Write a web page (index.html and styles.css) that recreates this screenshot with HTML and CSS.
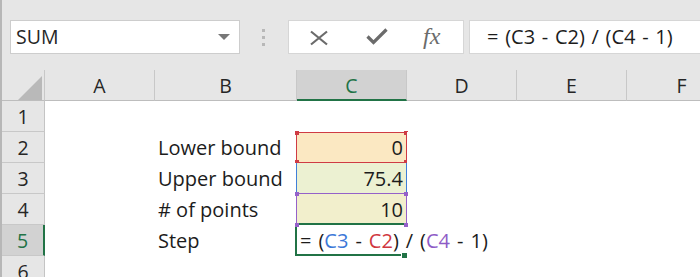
FILE: index.html
```html
<!DOCTYPE html>
<html>
<head>
<meta charset="utf-8">
<link rel="stylesheet" href="styles.css">
</head>
<body>
<div class="app">
  <div class="fbar">
    <div class="namebox">
      <span class="nb-text">SUM</span>
      <svg class="nb-arrow" width="12" height="6" viewBox="0 0 12 6"><polygon points="0,0 12,0 6,6" fill="#777"/></svg>
    </div>
    <div class="grip">
      <svg width="4" height="18" viewBox="0 0 4 18"><rect x="0" y="0" width="3" height="3" fill="#b8b8b8"/><rect x="0" y="7" width="3" height="3" fill="#b8b8b8"/><rect x="0" y="14" width="3" height="3" fill="#b8b8b8"/></svg>
    </div>
    <div class="fbtns">
      <svg class="ic-x" width="20" height="16" viewBox="0 0 20 16"><path d="M2 1.5 L18 14.5 M18 1.5 L2 14.5" stroke="#6b6b6b" stroke-width="2.2" fill="none"/></svg>
      <svg class="ic-check" width="22" height="17" viewBox="0 0 22 17"><path d="M1.5 8.5 L7.5 14.5 L20.5 1.5" stroke="#6b6b6b" stroke-width="3.2" fill="none" stroke-linejoin="miter"/></svg>
      <span class="ic-fx">fx</span>
    </div>
    <div class="finput">= (C3 - C2) / (C4 - 1)</div>
  </div>
  <div class="sheet">
    <div class="ch corner"><svg width="24" height="24" viewBox="0 0 24 24"><polygon points="24,0 24,24 0,24" fill="#b9b9b9"/></svg></div>
    <div class="ch">A</div>
    <div class="ch">B</div>
    <div class="ch sel">C</div>
    <div class="ch">D</div>
    <div class="ch">E</div>
    <div class="ch">F</div>

    <div class="rh">1</div>
    <div class="c"></div><div class="c"></div><div class="c"></div><div class="c"></div><div class="c"></div><div class="c"></div>

    <div class="rh">2</div>
    <div class="c"></div>
    <div class="c lbl">Lower bound</div>
    <div class="c num c2">0<span class="ref ref-red"><i class="sq tl"></i><i class="sq tr"></i><i class="sq bl"></i><i class="sq br"></i></span></div>
    <div class="c"></div><div class="c"></div><div class="c"></div>

    <div class="rh">3</div>
    <div class="c"></div>
    <div class="c lbl">Upper bound</div>
    <div class="c num c3">75.4<span class="ref ref-blue"></span></div>
    <div class="c"></div><div class="c"></div><div class="c"></div>

    <div class="rh">4</div>
    <div class="c"></div>
    <div class="c lbl"># of points</div>
    <div class="c num c4">10<span class="ref ref-purple"><i class="sq tl"></i><i class="sq tr"></i><i class="sq bl"></i><i class="sq br"></i></span></div>
    <div class="c"></div><div class="c"></div><div class="c"></div>

    <div class="rh sel">5</div>
    <div class="c"></div>
    <div class="c lbl">Step</div>
    <div class="c active"><span class="edit">= (<span class="t-blue">C3</span> - <span class="t-red">C2</span>) / (<span class="t-purple">C4</span> - 1)</span><span class="act-box"></span><span class="handle"></span></div>
    <div class="c"></div><div class="c"></div><div class="c"></div>

    <div class="rh">6</div>
    <div class="c"></div><div class="c"></div><div class="c"></div><div class="c"></div><div class="c"></div><div class="c"></div>
  </div>
</div>
</body>
</html>
```

FILE: styles.css
```css
html, body {
  margin: 0;
  padding: 0;
  background: #ffffff;
  overflow: hidden;
}
.app {
  width: 698px;
  height: 277px;
  border-left: 2px solid #b7b7b7;
  background: #e6e6e6;
  font-family: "Open Sans", "Noto Sans", sans-serif;
  font-size: 20px;
  color: #1c1c1c;
  overflow: hidden;
  position: relative;
}
.fbar {
  display: flex;
  align-items: stretch;
  height: 34px;
  padding-top: 20px;
  padding-left: 8px;
  margin-bottom: 16px;
  border-top: 1px solid #f3f3f3;
  margin-top: -1px;
}
.namebox {
  box-sizing: border-box;
  width: 230px;
  background: #fff;
  border: 1px solid #cdcdcd;
  display: flex;
  align-items: center;
  justify-content: space-between;
  padding: 0 9px 0 5px;
}
.nb-text {
  font-size: 19.5px;
  color: #262626;
  line-height: 1;
  margin-top: -1px;
}
.grip {
  width: 48px;
  display: flex;
  align-items: center;
  justify-content: center;
  padding-top: 2px;
}
.fbtns {
  box-sizing: border-box;
  width: 176px;
  background: #fff;
  border: 1px solid #d6d6d6;
  display: flex;
  align-items: center;
  position: relative;
}
.ic-x { margin-left: 20px; margin-top: 1px; }
.ic-check { margin-left: 37px; margin-top: -2px; }
.ic-fx {
  margin-left: 35px;
  font-family: "Liberation Serif", serif;
  font-style: italic;
  font-size: 24px;
  color: #6b6b6b;
  line-height: 1;
  margin-top: -3px;
}
.finput {
  box-sizing: border-box;
  flex: 1;
  margin-left: 5px;
  background: #fff;
  border: 1px solid #d6d6d6;
  border-right: none;
  padding-left: 17px;
  line-height: 31px;
  white-space: nowrap;
  color: #1c1c1c;
  word-spacing: 1.5px;
}
.sheet {
  display: grid;
  grid-template-columns: 43px 110px 142px 110px 110px 110px 110px;
  grid-template-rows: 31px repeat(6, 31px);
}
.ch {
  box-sizing: border-box;
  border-right: 1px solid #c8c8c8;
  border-bottom: 1px solid #bdbdbd;
  text-align: center;
  line-height: 30px;
  padding-top: 1px;
  color: #262626;
  font-size: 19.5px;
}
.ch.corner {
  display: flex;
  align-items: flex-end;
  justify-content: flex-end;
  padding: 0 2px 0 0;
  border-right: 1px solid #c8c8c8;
}
.ch.sel {
  background: #d2d2d2;
  color: #217346;
  border-bottom: 2px solid #217346;
  border-right-color: #c8c8c8;
}
.rh {
  box-sizing: border-box;
  border-right: 1px solid #c4c4c4;
  border-bottom: 1px solid #c8c8c8;
  text-align: center;
  line-height: 30px;
  padding-top: 1px;
  color: #262626;
  font-size: 19.5px;
}
.rh.sel {
  background: #d2d2d2;
  color: #217346;
  border-right: 2px solid #217346;
}
.c {
  background: #fff;
  line-height: 31px;
  position: relative;
  white-space: nowrap;
}
.lbl {
  padding-left: 3px;
}
.num {
  text-align: right;
  padding-right: 4px;
}
.c2 { background: #fbe8c2; }
.c3 { background: #ecf1d2; }
.c4 { background: #f2efcc; }
.ref {
  position: absolute;
  box-sizing: border-box;
  left: -1px;
  width: 111px;
  pointer-events: none;
}
.ref-red {
  top: 0;
  height: 31px;
  border: 1px solid #cf3b44;
}
.ref-blue {
  top: 0;
  height: 31px;
  border-left: 1px solid #3f7fd9;
  border-right: 1px solid #3f7fd9;
}
.ref-purple {
  top: -1px;
  height: 32px;
  border: 1px solid #9561c9;
  border-bottom-color: transparent;
  z-index: 3;
}
.sq {
  position: absolute;
  width: 4px;
  height: 4px;
}
.ref-red .sq { background: #cf3b44; }
.ref-purple .sq { background: #9561c9; }
.sq.tl { left: -2px; top: -2px; }
.sq.tr { right: -2px; top: -2px; }
.sq.bl { left: -2px; bottom: -2px; }
.sq.br { right: -2px; bottom: -2px; }
.ref-purple .sq.bl, .ref-purple .sq.br { bottom: -3px; }
.active {
  overflow: visible;
  z-index: 2;
  background: transparent;
}
.edit {
  position: relative;
  z-index: 1;
  padding-left: 3px;
  word-spacing: 1.8px;
}
.act-box {
  position: absolute;
  box-sizing: border-box;
  left: -2px;
  top: -2px;
  width: 112px;
  height: 33px;
  border: 2px solid #217346;
  border-right: none;
  background: #fff;
  z-index: 0;
}
.handle {
  position: absolute;
  left: 104px;
  top: 27px;
  width: 5px;
  height: 5px;
  background: #217346;
  border: 1px solid #fff;
  z-index: 1;
}
.t-blue { color: #3c78d8; }
.t-red { color: #d0373f; }
.t-purple { color: #8e5bc6; }
```
